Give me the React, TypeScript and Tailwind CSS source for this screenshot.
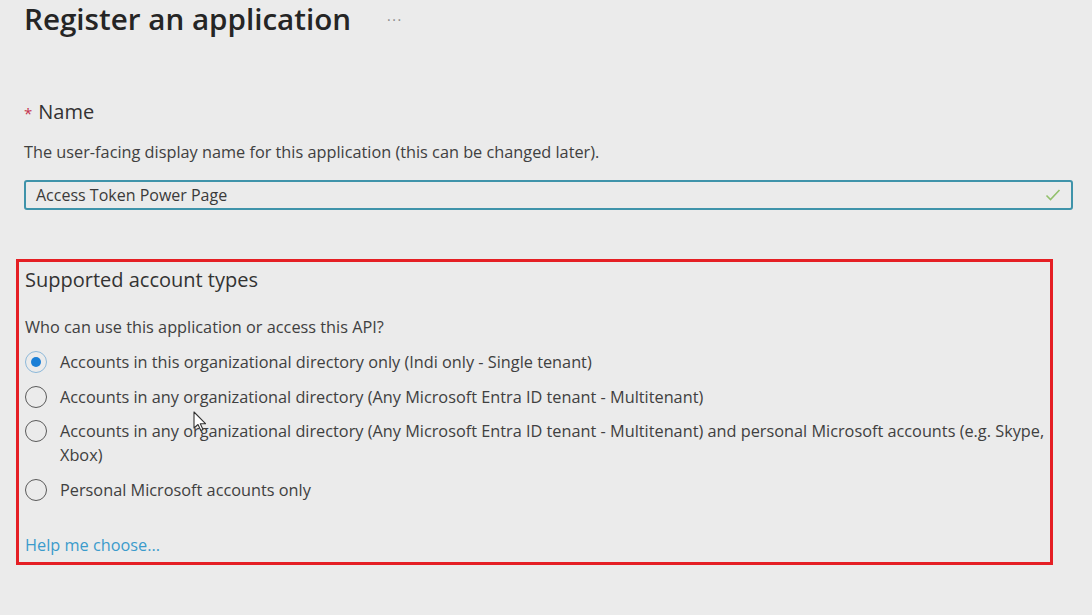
import React from "react";

// ── Radio option ──────────────────────────────────────────────────────────────
function RadioOption({ label, checked = false }: { label: string; checked?: boolean }) {
    return (
        <label className="flex items-start gap-[13px]">
            <span
                className={
                    checked
                        ? "mt-px w-[22px] h-[22px] flex-shrink-0 rounded-full border-[1.5px] border-[#8db9da] flex items-center justify-center"
                        : "mt-px w-[22px] h-[22px] flex-shrink-0 rounded-full border-[1.5px] border-[#5a5a5a]"
                }
            >
                {checked && <span className="w-[10px] h-[10px] rounded-full bg-[#1b7fd6]" />}
            </span>
            <span className="text-[16.3px] leading-[24px] text-[#404040] w-[988px]">{label}</span>
        </label>
    );
}

const options = [
    "Accounts in this organizational directory only (Indi only - Single tenant)",
    "Accounts in any organizational directory (Any Microsoft Entra ID tenant - Multitenant)",
    "Accounts in any organizational directory (Any Microsoft Entra ID tenant - Multitenant) and personal Microsoft accounts (e.g. Skype, Xbox)",
    "Personal Microsoft accounts only",
];

export default function App() {
    return (
        <div
            className="relative w-[1092px] h-[615px] overflow-hidden bg-[#ebebeb] text-[#333]"
            style={{ fontFamily: '"Open Sans", "Noto Sans", sans-serif' }}
        >
            {/* Header */}
            <div className="flex items-center gap-[36px] pl-[24px] pt-[1px] h-[36px]">
                <h1 className="text-[29.6px] leading-[34px] font-semibold text-[#252525]">Register an application</h1>
                <span className="text-[14px] tracking-[1.5px] text-[#8a8a8a] mt-[2px]">···</span>
            </div>

            {/* Name */}
            <div className="pl-[24px] pr-[19px] mt-[63px]">
                <div className="flex items-baseline gap-[6px] text-[20px] leading-[26px] text-[#333]">
                    <span className="text-[#c4314b] text-[15px]">*</span>
                    <span>Name</span>
                </div>
                <p className="mt-[16px] text-[16.3px] leading-[20px] text-[#404040]">
                    The user-facing display name for this application (this can be changed later).
                </p>
                <div className="mt-[18px] h-[30px] rounded-[3px] border-2 border-[#3f93aa] flex items-center justify-between pl-[10px] pr-[10px]">
                    <span className="text-[16px] text-[#3a3a3a]">Access Token Power Page</span>
                    <svg width="16" height="14" viewBox="0 0 16 14" fill="none">
                        <path d="M1.5 7.5 L5.5 11.5 L14.5 2" stroke="#92c06c" strokeWidth="1.6" />
                    </svg>
                </div>
            </div>

            {/* Supported account types */}
            <div className="ml-[16px] mt-[49px] w-[1037px] border-[3px] border-[#e51f24] pl-[6px] pt-[5px] pb-[7px]">
                <h2 className="text-[20px] leading-[26px] text-[#333]">Supported account types</h2>
                <p className="mt-[24px] text-[16.3px] leading-[20px] text-[#404040]">
                    Who can use this application or access this API?
                </p>
                <div className="mt-[13px] flex flex-col gap-[10.5px]">
                    {options.map((o, i) => (
                        <RadioOption key={i} label={o} checked={i === 0} />
                    ))}
                </div>
                <a className="block mt-[33px] text-[16.3px] leading-[20px] text-[#3b9bcb]">Help me choose...</a>
            </div>

            {/* Mouse cursor */}
            <svg className="absolute left-[193px] top-[411px]" width="14" height="21" viewBox="0 0 14 21">
                <path d="M1 1 L1 17 L5 13.5 L7.8 19.5 L10 18.5 L7.3 12.7 L12.5 12.7 Z" fill="#fff" stroke="#333" strokeWidth="1.1" strokeLinejoin="round" />
            </svg>
        </div>
    );
}
